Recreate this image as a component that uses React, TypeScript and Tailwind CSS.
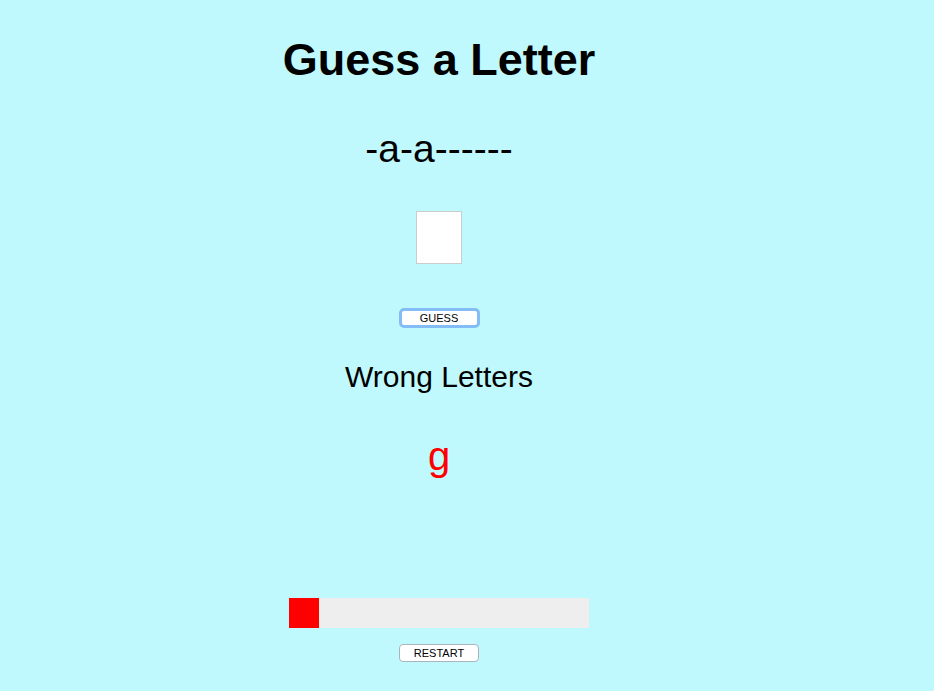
import React from 'react';

export default function App() {
  const wrong = ['g'];
  const progress = 10;

  return (
    <div className="min-h-screen w-full bg-[#bff9fd] text-black font-['Liberation_Sans',Arial,sans-serif]">
      <div className="ml-[289px] w-[300px] flex flex-col items-center pt-[37px]">
        <h1 className="text-[45px] leading-none font-bold whitespace-nowrap">Guess a Letter</h1>
        <div className="mt-[47px] text-[39px] leading-none whitespace-nowrap">-a-a------</div>
        <input
          type="text"
          maxLength={1}
          className="mt-[43px] w-[46px] h-[53px] bg-white border border-[#cccccc] outline-none text-center text-3xl"
        />
        <button className="mt-[44px] w-[81px] h-[20px] bg-white border-[3px] border-[#84bdf6] rounded-[5px] text-[11px] leading-none flex items-center justify-center">
          GUESS
        </button>
        <h2 className="mt-[34px] text-[30px] leading-none whitespace-nowrap">Wrong Letters</h2>
        <div className="mt-[44px] h-[40px] text-[40px] leading-none text-[#ff0000]">{wrong.join(' ')}</div>
        <div className="mt-[122px] w-[300px] h-[30px] bg-[#eeeeee]">
          <div className="h-full bg-[#ff0000]" style={{ width: `${progress}%` }} />
        </div>
        <button className="mt-[16px] w-[80px] h-[18px] bg-white border border-[#a9b4bb] rounded-[4px] text-[11px] leading-none flex items-center justify-center">
          RESTART
        </button>
      </div>
    </div>
  );
}
